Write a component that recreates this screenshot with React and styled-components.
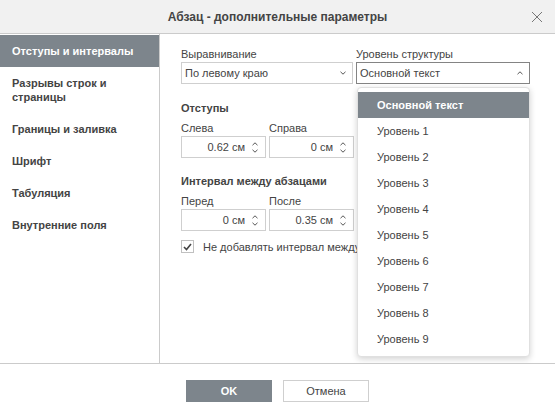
import React from "react";
import styled, { createGlobalStyle } from "styled-components";

const GlobalStyle = createGlobalStyle`
  html, body {
    margin: 0;
    padding: 0;
    background: #fff;
  }
  body {
    font-family: "Liberation Sans", Arial, sans-serif;
    font-size: 11px;
    color: #444;
  }
  * {
    box-sizing: border-box;
  }
`;

const Dialog = styled.div`
  width: 555px;
  height: 412px;
  display: flex;
  flex-direction: column;
  background: #fff;
  overflow: hidden;
`;

const Header = styled.div`
  flex: none;
  height: 34px;
  display: grid;
  grid-template-columns: 1fr auto 1fr;
  align-items: center;
  background: #f1f1f1;
  border-bottom: 1px solid #cbcbcb;
`;

const Title = styled.div`
  grid-column: 2;
  font-size: 12px;
  font-weight: bold;
  color: #444;
`;

const Close = styled.div`
  grid-column: 3;
  justify-self: end;
  width: 10px;
  height: 10px;
  margin-right: 13px;
  display: flex;
`;

const Body = styled.div`
  flex: 1;
  display: flex;
  min-height: 0;
`;

const Sidebar = styled.div`
  flex: none;
  width: 160px;
  padding-top: 1px;
  border-right: 1px solid #cbcbcb;
  display: flex;
  flex-direction: column;
`;

const NavItem = styled.div`
  padding: 9px 12px;
  line-height: 14px;
  font-weight: bold;
  background: ${(p) => (p.$active ? "#7d858c" : "transparent")};
  color: ${(p) => (p.$active ? "#fff" : "#444")};
`;

const Content = styled.div`
  flex: 1;
  padding: 13px 25px 0 21px;
  white-space: nowrap;
  overflow: hidden;
`;

const Row = styled.div`
  display: grid;
  grid-template-columns: ${(p) => p.$cols};
  column-gap: ${(p) => p.$gap};
  margin-top: ${(p) => p.$top || 0}px;
`;

const Field = styled.div`
  display: flex;
  flex-direction: column;
  position: relative;
`;

const Label = styled.div`
  line-height: 14px;
  margin-bottom: 1px;
`;

const SectionTitle = styled.div`
  font-weight: bold;
  line-height: 14px;
  margin-top: ${(p) => p.$top}px;
`;

const SelectBox = styled.div`
  height: 22px;
  display: flex;
  align-items: center;
  justify-content: space-between;
  padding: 0 6px 0 3px;
  border: 1px solid ${(p) => (p.$open ? "#848484" : "#cfcfcf")};
  background: #fff;
`;

const SpinBox = styled.div`
  height: 22px;
  display: flex;
  align-items: center;
  justify-content: flex-end;
  border: 1px solid #cfcfcf;
  background: #fff;
  padding-right: 7px;
`;

const SpinValue = styled.span`
  margin-right: 7px;
`;

const SpinArrows = styled.div`
  display: flex;
  flex-direction: column;
  gap: 3px;
  width: 6px;
`;

const CheckRow = styled.div`
  display: flex;
  align-items: center;
  gap: 9px;
  margin-top: 9px;
`;

const CheckBox = styled.div`
  width: 13px;
  height: 13px;
  border: 1px solid #c0c0c0;
  display: flex;
  align-items: center;
  justify-content: center;
  flex: none;
`;

const Menu = styled.div`
  position: absolute;
  top: calc(100% + 3px);
  left: 1px;
  width: 173px;
  padding: 4px 0;
  background: #fff;
  border: 1px solid #e0e0e0;
  border-radius: 4px;
  box-shadow: 0 2px 6px rgba(0, 0, 0, 0.18);
  z-index: 5;
`;

const MenuItem = styled.div`
  height: 26px;
  line-height: 26px;
  padding-left: 19px;
  font-weight: ${(p) => (p.$active ? "bold" : "normal")};
  background: ${(p) => (p.$active ? "#7d858c" : "transparent")};
  color: ${(p) => (p.$active ? "#fff" : "#444")};
`;

const Footer = styled.div`
  flex: none;
  height: 49px;
  border-top: 1px solid #cbcbcb;
  display: flex;
  justify-content: center;
  align-items: flex-start;
  gap: 11px;
  padding-top: 16px;
`;

const Button = styled.button`
  width: 86px;
  height: 22px;
  font-family: inherit;
  font-size: 11px;
  border: 1px solid ${(p) => (p.$primary ? "#7d858c" : "#cfcfcf")};
  background: ${(p) => (p.$primary ? "#7d858c" : "#fff")};
  color: ${(p) => (p.$primary ? "#fff" : "#444")};
  font-weight: ${(p) => (p.$primary ? "bold" : "normal")};
  padding: 0;
`;

const Chevron = ({ up }) => (
  <svg width="6" height="4" viewBox="0 0 6 4">
    <path
      d={up ? "M0.5 3.2 L3 0.8 L5.5 3.2" : "M0.5 0.8 L3 3.2 L5.5 0.8"}
      fill="none"
      stroke="#555"
      strokeWidth="1"
    />
  </svg>
);

const Spinner = ({ value }) => (
  <SpinBox>
    <SpinValue>{value}</SpinValue>
    <SpinArrows>
      <Chevron up />
      <Chevron />
    </SpinArrows>
  </SpinBox>
);

const navItems = [
  "Отступы и интервалы",
  "Разрывы строк и страницы",
  "Границы и заливка",
  "Шрифт",
  "Табуляция",
  "Внутренние поля",
];

const levels = [
  "Основной текст",
  "Уровень 1",
  "Уровень 2",
  "Уровень 3",
  "Уровень 4",
  "Уровень 5",
  "Уровень 6",
  "Уровень 7",
  "Уровень 8",
  "Уровень 9",
];

export default function App() {
  return (
    <>
      <GlobalStyle />
      <Dialog>
        <Header>
          <Title>Абзац - дополнительные параметры</Title>
          <Close>
            <svg width="10" height="10" viewBox="0 0 10 10">
              <path d="M0 0 L10 10 M10 0 L0 10" stroke="#777" strokeWidth="1" />
            </svg>
          </Close>
        </Header>
        <Body>
          <Sidebar>
            {navItems.map((item, i) => (
              <NavItem key={item} $active={i === 0}>
                {item === "Разрывы строк и страницы" ? (
                  <>
                    Разрывы строк и
                    <br />
                    страницы
                  </>
                ) : (
                  item
                )}
              </NavItem>
            ))}
          </Sidebar>
          <Content>
            <Row $cols="172px 174px" $gap="3px">
              <Field>
                <Label>Выравнивание</Label>
                <SelectBox>
                  <span>По левому краю</span>
                  <Chevron />
                </SelectBox>
              </Field>
              <Field>
                <Label>Уровень структуры</Label>
                <SelectBox $open>
                  <span>Основной текст</span>
                  <Chevron up />
                </SelectBox>
                <Menu>
                  {levels.map((l, i) => (
                    <MenuItem key={l} $active={i === 0}>
                      {l}
                    </MenuItem>
                  ))}
                </Menu>
              </Field>
            </Row>

            <SectionTitle $top={17}>Отступы</SectionTitle>
            <Row $cols="85px 85px" $gap="3px" $top={6}>
              <Field>
                <Label>Слева</Label>
                <Spinner value="0.62 см" />
              </Field>
              <Field>
                <Label>Справа</Label>
                <Spinner value="0 см" />
              </Field>
            </Row>

            <SectionTitle $top={16}>Интервал между абзацами</SectionTitle>
            <Row $cols="85px 85px" $gap="3px" $top={6}>
              <Field>
                <Label>Перед</Label>
                <Spinner value="0 см" />
              </Field>
              <Field>
                <Label>После</Label>
                <Spinner value="0.35 см" />
              </Field>
            </Row>

            <CheckRow>
              <CheckBox>
                <svg width="9" height="8" viewBox="0 0 9 8">
                  <path
                    d="M1 4 L3.5 6.5 L8 1"
                    fill="none"
                    stroke="#444"
                    strokeWidth="1.6"
                  />
                </svg>
              </CheckBox>
              <span>Не добавлять интервал между абзацами одного стиля</span>
            </CheckRow>
          </Content>
        </Body>
        <Footer>
          <Button $primary>OK</Button>
          <Button>Отмена</Button>
        </Footer>
      </Dialog>
    </>
  );
}
